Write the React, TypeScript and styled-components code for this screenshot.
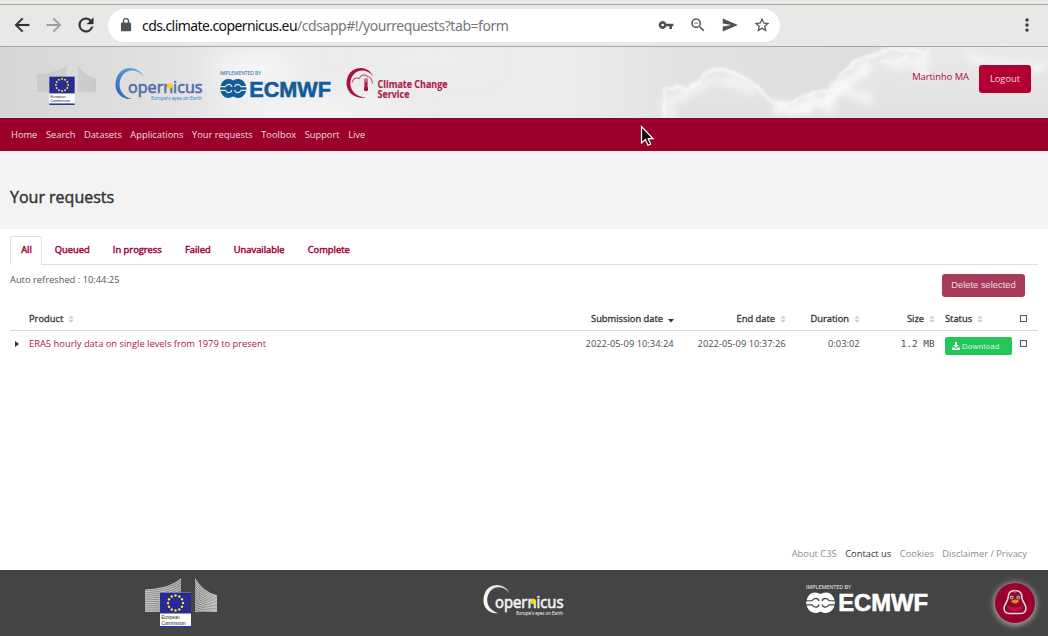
import React from "react";
import styled, { createGlobalStyle } from "styled-components";

const Global = createGlobalStyle`
  html, body { margin: 0; padding: 0; background: #fff; }
  * { box-sizing: border-box; }
  body { font-family: "Open Sans", "Noto Sans", sans-serif; font-size: 9.33px; color: #444; overflow: hidden; }
`;

const Page = styled.div`
  position: relative;
  width: 1048px;
  height: 636px;
  display: flex;
  flex-direction: column;
  overflow: hidden;
`;

const Toolbar = styled.div`
  height: 47px;
  flex: none;
  display: flex;
  flex-direction: column;
  background: #e8e8e6;
  border-bottom: 1px solid #a6a6a2;
`;
const WindowEdge = styled.div`
  height: 5px;
  border-bottom: 1px solid #a6a6a2;
`;
const ToolbarRow = styled.div`
  display: flex;
  align-items: center;
  padding: 4px 10.5px 0 11px;
  justify-content: space-between;
`;
const Group = styled.div`
  display: flex;
  align-items: center;
`;
const NavIcon = styled.svg<{ $tone: string }>`
  width: 22px;
  height: 22px;
  margin: -1px 10px 0 0;
  fill: ${(p) => p.$tone};
`;
const Address = styled.div`
  width: 672px;
  height: 33px;
  border-radius: 17px;
  background: #fff;
  display: flex;
  align-items: center;
  padding: 0 9px 1px 11px;
  margin-left: 1px;
`;
const Url = styled.div`
  flex: 1;
  margin-left: 9px;
  font: 14px "Noto Sans", sans-serif;
  letter-spacing: -0.44px;
  color: #777;
  white-space: nowrap;
`;
const Host = styled.span`
  color: #111;
  letter-spacing: -0.58px;
`;
const AddressIcon = styled.svg<{ $size?: number; $gap?: number }>`
  width: ${(p) => p.$size ?? 20}px;
  height: ${(p) => p.$size ?? 20}px;
  margin-left: ${(p) => p.$gap ?? 0}px;
  fill: #505154;
`;
const MenuIcon = styled(AddressIcon)`
  margin-top: -1px;
  fill: #2e3436;
`;

const Header = styled.header`
  position: relative;
  height: 71px;
  flex: none;
  display: flex;
  justify-content: space-between;
  background: #e4e4e4;
`;
const Sky = styled.svg`
  position: absolute;
  inset: 0;
  width: 1048px;
  height: 71px;
`;
const Logos = styled.div`
  position: relative;
  display: flex;
  padding-left: 37px;
`;
const Logo = styled.svg<{ $w: number; $h: number; $top?: number; $left?: number }>`
  width: ${(p) => p.$w}px;
  height: ${(p) => p.$h}px;
  margin-top: ${(p) => p.$top ?? 0}px;
  margin-left: ${(p) => p.$left ?? 0}px;
  overflow: visible;
  flex: none;
`;
const Account = styled.div`
  position: relative;
  display: flex;
  padding: 18px 17px 0 0;
  color: #a8093a;
`;
const UserName = styled.span`
  margin: 5px 10px 0 0;
  line-height: 13px;
`;
const Logout = styled.button`
  width: 52px;
  height: 28px;
  border: 0;
  border-radius: 3px;
  background: #b30033;
  color: #f6dbe3;
  font: inherit;
  padding: 0 0 1px;
`;

const NavBar = styled.nav`
  height: 33px;
  flex: none;
  display: flex;
  align-items: center;
  gap: 8.5px;
  padding-left: 11px;
  background: #9b002d;
  color: #f1dbe2;
`;
const TitleBand = styled.div`
  height: 78px;
  flex: none;
  display: flex;
  align-items: center;
  padding: 13px 0 0 10px;
  background: #f3f3f3;
`;
const Title = styled.h1`
  margin: 0;
  font-size: 16px;
  font-weight: 400;
  color: #333;
  -webkit-text-stroke: 0.45px #333;
`;

const Content = styled.main`
  flex: 1;
  padding: 7px 10px 0;
`;
const Tabs = styled.div`
  display: flex;
  height: 29px;
  border-bottom: 1px solid #dee0e6;
`;
const Tab = styled.div<{ $active?: boolean }>`
  height: 29px;
  padding: ${(p) => (p.$active ? "0 9.5px 0 10.2px" : "1px 11.6px 0")};
  margin-right: ${(p) => (p.$active ? 0.9 : 0)}px;
  line-height: 26px;
  border: ${(p) => (p.$active ? "1px solid #dee0e6" : "0")};
  border-bottom: 0;
  border-radius: 2px 2px 0 0;
  background: ${(p) => (p.$active ? "#fff" : "none")};
  color: #a3003a;
  -webkit-text-stroke: 0.45px #a3003a;
`;
const Actions = styled.div`
  display: flex;
  justify-content: space-between;
  padding: 9px 13px 0 0;
  height: 42px;
`;
const Refreshed = styled.span`
  line-height: 12px;
  color: #555;
`;
const DeleteButton = styled.button`
  width: 83px;
  height: 23px;
  border: 0;
  border-radius: 3px;
  padding: 0 0 1px;
  background: #a73a5b;
  color: #f0dbe1;
  font: 9.33px "Liberation Sans", sans-serif;
`;
const Row = styled.div<{ $head?: boolean }>`
  display: grid;
  grid-template-columns: 14px 1fr 110px 112px 74px 75px 77px 21px;
  height: ${(p) => (p.$head ? 24 : 25)}px;
  line-height: ${(p) => (p.$head ? 23 : 24)}px;
  color: ${(p) => (p.$head ? "#333" : "#4c4c4c")};
  border-bottom: ${(p) => (p.$head ? "1px solid #d9dbde" : "0")};
  -webkit-text-stroke: ${(p) => (p.$head ? "0.3px #333" : "0")};
`;
const Cell = styled.div<{ $right?: boolean; $mono?: boolean }>`
  display: flex;
  align-items: center;
  justify-content: ${(p) => (p.$right ? "flex-end" : "flex-start")};
  padding: ${(p) => (p.$right ? "0 5.4px 0 0" : "0 5px")};
  white-space: nowrap;
  ${(p) => p.$mono && 'font-family: "DejaVu Sans Mono", monospace; font-size: 9.4px;'}
`;
const Product = styled.a`
  color: #a8174a;
`;
const SortMark = styled.svg`
  width: 6px;
  height: 8px;
  margin-left: 4.6px;
`;
const Caret = styled.svg`
  width: 4px;
  height: 6px;
`;
const Download = styled.button`
  width: 67px;
  height: 18px;
  margin-top: 5px;
  border: 0;
  border-radius: 2px;
  background: #22c757;
  color: #e3f9ea;
  display: flex;
  align-items: center;
  padding: 0 0 0 7px;
  gap: 2px;
  font: 7.7px "Liberation Sans", sans-serif;
  letter-spacing: 0.45px;
  flex: none;
`;
const Check = styled.span`
  width: 7px;
  height: 7px;
  margin-left: -2px;
  border: 1px solid #555;
  background: #fff;
`;
const Links = styled.div`
  display: flex;
  justify-content: flex-end;
  gap: 8.5px;
  padding-right: 21px;
  height: 24px;
  line-height: 15px;
  color: #8c8c8c;
  flex: none;
`;
const StrongLink = styled.span`
  color: #333;
`;
const Footer = styled.footer`
  height: 66px;
  flex: none;
  display: flex;
  padding-left: 145px;
  background: #444;
`;
const Duck = styled.div`
  width: 40px;
  height: 40px;
  margin: 13px 0 0 67px;
  border-radius: 50%;
  background: #9b002d;
  box-shadow: 0 1px 6px 1px #b5b5b5;
`;
const Pointer = styled.svg`
  position: absolute;
  left: 640px;
  top: 125px;
  width: 14px;
  height: 22px;
`;

function Commission({ w, h, top, left, dark }: { w: number; h: number; top: number; left?: number; dark?: boolean }) {
  const id = dark ? "cd" : "cl";
  const rows = Array.from({ length: 14 }, (_, i) => i);
  const leftWall = "M0 11.5Q26 10 36 0V34H0Z";
  const rightWall = "M50 0Q58 14 72 17V34H50Z";
  return (
    <Logo $w={w} $h={h} $top={top} $left={left} viewBox="0 0 72 50" preserveAspectRatio="none">
      <clipPath id={id + "l"}><path d={leftWall} /></clipPath>
      <clipPath id={id + "r"}><path d={rightWall} /></clipPath>
      <path d={leftWall + rightWall} fill={dark ? "#999" : "#cfcfcf"} opacity={dark ? 0.75 : 0.6} />
      <g fill="none" stroke={dark ? "#cfcfcf" : "#c2c2c2"} strokeWidth={dark ? 1 : 0.8}>
        <g clipPath={`url(#${id}l)`}>
          {rows.map((i) => <path key={i} d={`M0 ${12 + i * 1.8}Q24 ${11 + i * 2} 36 ${1 + i * 2.6}`} />)}
        </g>
        <g clipPath={`url(#${id}r)`}>
          {rows.map((i) => <path key={i} d={`M50 ${1 + i * 2.7}Q58 ${14 + i * 1.8} 72 ${18 + i * 1.3}`} />)}
        </g>
      </g>
      <rect x="15" y="14.5" width="31" height="35.5" fill="#fff" />
      <rect x="15" y="14.5" width="31" height="21" fill="#282c92" />
      <rect x="15" y="48" width="31" height="2" fill="#2c3d91" />
      {Array.from({ length: 12 }, (_, i) => (
        <circle key={i} cx={30.5 + 7.5 * Math.sin((i * Math.PI) / 6)} cy={25 - 7.5 * Math.cos((i * Math.PI) / 6)} r="1.2" fill="#f0e72f" />
      ))}
      <g fontFamily="Liberation Sans" fontSize="5" fill="#222">
        <text x="16.5" y="41" textLength="18" lengthAdjust="spacingAndGlyphs">European</text>
        <text x="16.5" y="46.5" textLength="24" lengthAdjust="spacingAndGlyphs">Commission</text>
      </g>
    </Logo>
  );
}

function Copernicus({ w, h, top, left, dark }: { w: number; h: number; top: number; left: number; dark?: boolean }) {
  const id = dark ? "gd" : "gl";
  const ink = dark ? "#f2f2f2" : "#536fa9";
  return (
    <Logo $w={w} $h={h} $top={top} $left={left} viewBox="0 0 88 34" preserveAspectRatio="none">
      <linearGradient id={id} x1="0" y1="1" x2="1" y2="0">
        <stop offset="0" stopColor={dark ? "#fff" : "#2b62ac"} />
        <stop offset="1" stopColor={dark ? "#ddd" : "#74b0e4"} />
      </linearGradient>
      <path d="M29 9C23-3 7-3 2 9C-3 22 5 32 17 31C8 29 3 21 5 13C8 1 21-1 29 9Z" fill={`url(#${id})`} />
      <text x="13" y="25.2" fontFamily="Open Sans" fontSize="17" fill={ink} stroke={ink} strokeWidth=".7" textLength="74.5" lengthAdjust="spacingAndGlyphs">opernicus</text>
      <circle cx="54.5" cy="18" r="2.8" fill="#fbd311" />
      <text x="36" y="32.4" fontFamily="Open Sans" fontSize="5.4" fill={dark ? "#ddd" : "#5e9bd4"} stroke={dark ? "#ddd" : "#5e9bd4"} strokeWidth=".15" textLength="51" lengthAdjust="spacingAndGlyphs">Europe's eyes on Earth</text>
    </Logo>
  );
}

function Ecmwf({ w, h, top, left, dark }: { w: number; h: number; top: number; left: number; dark?: boolean }) {
  const ink = dark ? "#fff" : "#125b9c";
  const gap = dark ? "#444" : "#e9e9e9";
  return (
    <Logo $w={w} $h={h} $top={top} $left={left} viewBox="0 0 111 28" preserveAspectRatio="none">
      <text x="0" y="4.3" fontFamily="Open Sans" fontSize="5" fill={dark ? "#ddd" : "#3f7fb3"} stroke={dark ? "#ddd" : "#3f7fb3"} strokeWidth=".1" textLength="41" lengthAdjust="spacingAndGlyphs">IMPLEMENTED BY</text>
      <path d="M13.2 9.4Q11 8 8.5 8Q3.6 8 1.2 13Q-.8 17.5 1.2 22Q3.6 27 8.5 27Q11 27 13.2 25.6Q15.4 27 18 27Q22.8 27 25.3 22Q27.3 17.5 25.3 13Q22.8 8 18 8Q15.4 8 13.2 9.4Z" fill={ink} />
      <g fill="none" stroke={gap} strokeWidth="1.1">
        <path d="M0 15.6H5.5Q6.6 13.4 9 13.4Q11.6 13.6 11.8 16M0 19.4H5.5Q6.6 21.6 9 21.6Q11.6 21.4 11.8 19" />
        <path d="M27 15.6H21Q19.9 13.4 17.5 13.4Q14.9 13.6 14.7 16M27 19.4H21Q19.9 21.6 17.5 21.6Q14.9 21.4 14.7 19" />
      </g>
      <text x="29.3" y="25.6" fontFamily="Liberation Sans" fontWeight="700" fontSize="22.4" fill={ink} stroke={ink} strokeWidth=".6" textLength="81.7" lengthAdjust="spacingAndGlyphs">ECMWF</text>
    </Logo>
  );
}

function Climate() {
  return (
    <Logo $w={102} $h={31} $top={21} $left={15} viewBox="0 0 102 31">
      <path d="M27.5 8.5C22-3 7-2.5 2 8C-3 21 6 31.5 20 29.5C10 29 3 22 4.5 13C7 1 20-1 27.5 8.5Z" fill="#a9103f" />
      <path d="M6 14.5Q8 8.5 13 10.5Q17 4.5 21.5 8.5Q26 9 26.5 15.5" fill="none" stroke="#b94a6a" strokeWidth="1.1" />
      <path d="M20 12V20" stroke="#c4708a" strokeWidth="4" strokeLinecap="round" />
      <path d="M20 14V20" stroke="#a9103f" strokeWidth="1.8" />
      <circle cx="20" cy="21" r="2.2" fill="#a9103f" />
      <g fontFamily="Open Sans" fontWeight="700" fontSize="9.8" fill="#b0204c" stroke="#b0204c" strokeWidth=".15">
        <text x="31.5" y="20" textLength="70" lengthAdjust="spacingAndGlyphs">Climate Change</text>
        <text x="31.5" y="29.5" textLength="32" lengthAdjust="spacingAndGlyphs">Service</text>
      </g>
    </Logo>
  );
}

function Clouds() {
  return (
    <Sky viewBox="0 0 1048 71">
      <defs>
        <linearGradient id="sky">
          <stop offset="0" stopColor="#d6d6d6" /><stop offset=".12" stopColor="#dedede" />
          <stop offset=".25" stopColor="#ebebeb" /><stop offset=".55" stopColor="#ebebeb" />
          <stop offset=".65" stopColor="#e2e2e2" /><stop offset="1" stopColor="#dbdbdb" />
        </linearGradient>
        <linearGradient id="puff" x1="0" y1="0" x2="0" y2="1">
          <stop offset="0" stopColor="#e9e9e9" /><stop offset="1" stopColor="#e1e1e1" />
        </linearGradient>
        <filter id="soft" x="-30%" y="-80%" width="160%" height="260%"><feGaussianBlur stdDeviation="12" /></filter>
        <filter id="edge"><feTurbulence type="fractalNoise" baseFrequency=".12" numOctaves="3" seed="4" /><feDisplacementMap in="SourceGraphic" scale="5" /><feGaussianBlur stdDeviation="0.9" /></filter>
        <filter id="mist" x="-5%" y="-30%" width="110%" height="160%"><feTurbulence type="fractalNoise" baseFrequency=".06" numOctaves="3" seed="9" /><feDisplacementMap in="SourceGraphic" scale="14" /><feGaussianBlur stdDeviation="3.2" /></filter>
      </defs>
      <rect width="1048" height="71" fill="url(#sky)" />
      <g filter="url(#soft)" fill="#f6f6f6">
        <ellipse cx="255" cy="22" rx="45" ry="16" /><ellipse cx="310" cy="62" rx="100" ry="10" />
        <ellipse cx="430" cy="12" rx="60" ry="10" opacity=".4" />
      </g>
      <path d="M662 75V41Q668 38 684 42Q700 36 706 24Q720 16 737 25Q756 35 763 48Q778 62 798 55Q818 44 834 38Q848 12 870 7Q888 -2 918 -6L1052 -6V75Z" fill="url(#puff)" filter="url(#edge)" />
      <g filter="url(#mist)" fill="none" stroke="#fcfcfc">
        <path d="M774 60Q792 64 812 58L834 50Q852 28 870 18" strokeWidth="13" opacity=".8" />
        <path d="M828 45V68M840 42L874 54" strokeWidth="10" opacity=".55" />
        <path d="M670 72V52Q688 48 710 36Q732 30 757 46" strokeWidth="9" opacity=".6" />
        <path d="M885 14Q905 22 920 12M925 8Q928 22 915 28M970 12L1048 22" strokeWidth="8" opacity=".6" />
      </g>
      <g filter="url(#edge)" fill="none" stroke="#f9f9f9">
        <path d="M665 73L664 44Q668 39 685 42Q700 38 706 27Q716 19 732 25Q755 35 764 47Q775 61 792 56Q805 46 830 44Q845 20 861 12Q876 8 886 4Q900 0 926 6" strokeWidth="2.8" opacity=".9" />
        <path d="M880 14Q898 18 908 6M915 20Q924 8 930 2" strokeWidth="3" opacity=".7" />
      </g>
    </Sky>
  );
}

function Sort({ active }: { active?: boolean }) {
  return (
    <SortMark viewBox="0 0 6 8">
      {active ? <path d="M0 4H6L3 7.5Z" fill="#333" /> : <path d="M0 3.4L3 .4L6 3.4ZM0 4.8H6L3 7.8Z" fill="#cfcfcf" />}
    </SortMark>
  );
}

function Assistant() {
  return (
    <Duck>
      <svg width="40" height="40" viewBox="0 0 40 40">
        <path d="M20 7.5C14.5 7.5 13 11.5 13 15C13 18 10 20 9.2 24C8.5 28.5 11 30.5 14.5 30.5H25.5C29 30.5 31.5 28.5 30.8 24C30 20 27 18 27 15C27 11.5 25.5 7.5 20 7.5Z" fill="#8a0a30" stroke="#f0d5dc" strokeWidth="1.5" />
        <path d="M12.5 22Q20 27 27.5 22Q28 28.5 20 28.5Q12 28.5 12.5 22Z" fill="#c20d48" />
        <path d="M20 7V10" stroke="#f06a7c" strokeWidth="1.2" />
        <circle cx="16.7" cy="14.6" r="2" fill="#a5adaf" /><circle cx="23.3" cy="14.6" r="2" fill="#a5adaf" />
        <circle cx="16.9" cy="14.8" r=".8" fill="#33202a" /><circle cx="23.1" cy="14.8" r=".8" fill="#33202a" />
        <path d="M15.8 18Q20 14.8 24.2 18Q20 23.2 15.8 18Z" fill="#f58220" />
      </svg>
    </Duck>
  );
}

const menu = ["Home", "Search", "Datasets", "Applications", "Your requests", "Toolbox", "Support", "Live"];
const tabs = ["All", "Queued", "In progress", "Failed", "Unavailable", "Complete"];

export default function App() {
  return (
    <Page>
      <Global />
      <Toolbar>
        <WindowEdge />
        <ToolbarRow>
          <Group>
            <NavIcon $tone="#2e3436" viewBox="0 0 24 24"><path d="M20 11H7.83l5.59-5.59L12 4l-8 8 8 8 1.41-1.41L7.83 13H20z" stroke="#2e3436" strokeWidth=".2" /></NavIcon>
            <NavIcon $tone="#9b9d9c" viewBox="0 0 24 24"><path d="M12 4l-1.41 1.41L16.17 11H4v2h12.17l-5.58 5.59L12 20l8-8z" /></NavIcon>
            <NavIcon $tone="#2e3436" viewBox="0 0 24 24"><path d="M17.65 6.35A7.96 7.96 0 0 0 12 4a8 8 0 1 0 7.73 10h-2.08A6 6 0 1 1 12 6c1.66 0 3.14.69 4.22 1.78L13 11h7V4z" stroke="#2e3436" strokeWidth=".4" /></NavIcon>
            <Address>
              <AddressIcon $size={14} viewBox="3 1 18 22"><path d="M18 8h-1V6A5 5 0 0 0 7 6v2H6a2 2 0 0 0-2 2v10c0 1.1.9 2 2 2h12a2 2 0 0 0 2-2V10a2 2 0 0 0-2-2zM9 8V6a3 3 0 0 1 6 0v2z" /></AddressIcon>
              <Url><Host>cds.climate.copernicus.eu</Host>/cdsapp#!/yourrequests?tab=form</Url>
              <AddressIcon $size={16} viewBox="0 0 24 24"><path d="M12.65 10A6 6 0 1 0 12.65 14H17v4h4v-4h2v-4zM7 14a2 2 0 1 1 0-4 2 2 0 0 1 0 4z" /></AddressIcon>
              <AddressIcon $size={18} $gap={15} viewBox="0 0 24 24"><path d="M15.5 14h-.79l-.28-.27A6.5 6.5 0 1 0 13.73 14.43l.27.28v.79l5 4.99L20.49 19zM9.5 14a4.5 4.5 0 1 1 0-9 4.5 4.5 0 0 1 0 9zM7 9h5v1H7z" /></AddressIcon>
              <AddressIcon $size={16} $gap={15} viewBox="1 1 22 22"><path d="M2 21L23 12 2 3v7l12 2-12 2z" /></AddressIcon>
              <AddressIcon $size={18} $gap={15} viewBox="0 0 24 24"><path d="M22 9.24l-7.19-.62L12 2 9.19 8.63 2 9.24l5.46 4.73L5.82 21 12 17.27 18.18 21l-1.63-7.03zM12 15.4l-3.76 2.27 1-4.28-3.32-2.88 4.38-.38L12 6.1l1.71 4.04 4.38.38-3.32 2.88 1 4.28z" /></AddressIcon>
            </Address>
          </Group>
          <MenuIcon $size={22} viewBox="0 0 24 24"><circle cx="12" cy="6.5" r="1.8" /><circle cx="12" cy="12" r="1.8" /><circle cx="12" cy="17.5" r="1.8" /></MenuIcon>
        </ToolbarRow>
      </Toolbar>
      <Header>
        <Clouds />
        <Logos>
          <Commission w={59} h={40} top={18} />
          <Copernicus w={88} h={34} top={21} left={19} />
          <Ecmwf w={111} h={28} top={24} left={17} />
          <Climate />
        </Logos>
        <Account><UserName>Martinho MA</UserName><Logout>Logout</Logout></Account>
      </Header>
      <NavBar>{menu.map((m) => <span key={m}>{m}</span>)}</NavBar>
      <TitleBand><Title>Your requests</Title></TitleBand>
      <Content>
        <Tabs>{tabs.map((t, i) => <Tab key={t} $active={i === 0}>{t}</Tab>)}</Tabs>
        <Actions><Refreshed>Auto refreshed : 10:44:25</Refreshed><DeleteButton>Delete selected</DeleteButton></Actions>
        <Row $head>
          <Cell />
          <Cell>Product<Sort /></Cell>
          <Cell $right>Submission date<Sort active /></Cell>
          <Cell $right>End date<Sort /></Cell>
          <Cell $right>Duration<Sort /></Cell>
          <Cell $right>Size<Sort /></Cell>
          <Cell>Status<Sort /></Cell>
          <Cell><Check /></Cell>
        </Row>
        <Row>
          <Cell><Caret viewBox="0 0 4 6"><path d="M0 0L4 3L0 6Z" fill="#333" /></Caret></Cell>
          <Cell><Product>ERA5 hourly data on single levels from 1979 to present</Product></Cell>
          <Cell $right>2022-05-09 10:34:24</Cell>
          <Cell $right>2022-05-09 10:37:26</Cell>
          <Cell $right>0:03:02</Cell>
          <Cell $right $mono>1.2 MB</Cell>
          <Cell>
            <Download>
              <svg width="8" height="8" viewBox="0 0 8 8" fill="#fff"><path d="M3 0H5V3H7L4 6L1 3H3ZM0 5.5H1.8L4 7L6.2 5.5H8V8H0Z" /></svg>
              Download
            </Download>
          </Cell>
          <Cell><Check /></Cell>
        </Row>
      </Content>
      <Links><span>About C3S</span><StrongLink>Contact us</StrongLink><span>Cookies</span><span>Disclaimer / Privacy</span></Links>
      <Footer>
        <Commission w={72} h={50} top={8} dark />
        <Copernicus w={81} h={31} top={15} left={266} dark />
        <Ecmwf w={122} h={30} top={14} left={242} dark />
        <Assistant />
      </Footer>
      <Pointer viewBox="0 0 14 22">
        <path d="M1.5 1.5V18L5.4 14.6L8 20.2L10.6 19L8.2 13.6H13Z" fill="#111" stroke="#fff" strokeWidth="1.2" />
      </Pointer>
    </Page>
  );
}
